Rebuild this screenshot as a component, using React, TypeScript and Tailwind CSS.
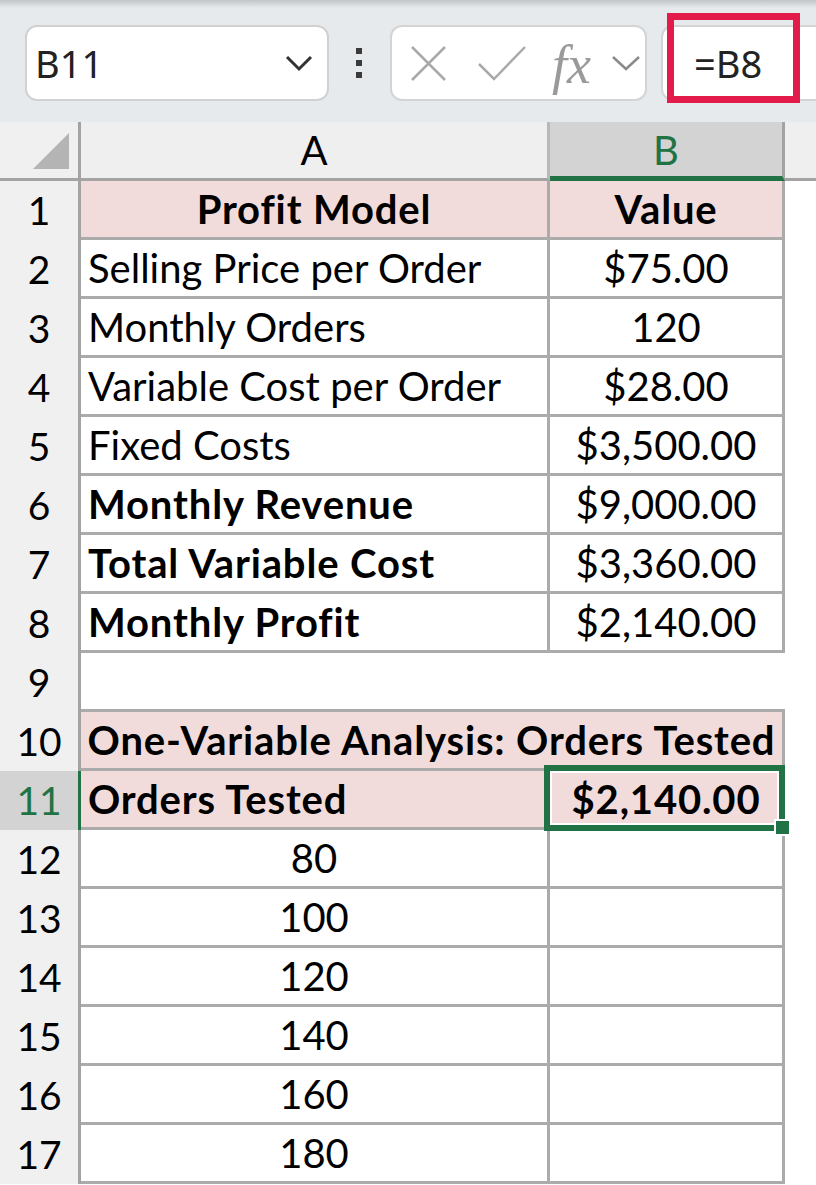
import React from "react";

type Row = {
  n: number;
  a?: string;
  b?: string;
  bold?: boolean;
  head?: boolean;
  centerA?: boolean;
};

const rows: Row[] = [
  { n: 1, a: "Profit Model", b: "Value", bold: true, head: true, centerA: true },
  { n: 2, a: "Selling Price per Order", b: "$75.00" },
  { n: 3, a: "Monthly Orders", b: "120" },
  { n: 4, a: "Variable Cost per Order", b: "$28.00" },
  { n: 5, a: "Fixed Costs", b: "$3,500.00" },
  { n: 6, a: "Monthly Revenue", b: "$9,000.00", bold: true },
  { n: 7, a: "Total Variable Cost", b: "$3,360.00", bold: true },
  { n: 8, a: "Monthly Profit", b: "$2,140.00", bold: true },
];

const tested = [80, 100, 120, 140, 160, 180];

const font = { fontFamily: "Lato, 'Open Sans', sans-serif" };

const bold = "font-bold tracking-[0.85px]";

function RowHeader({ n, active }: { n: number; active?: boolean }) {
  return (
    <div
      className={
        "flex w-[81px] shrink-0 flex-col border-r-[3px] " +
        (active ? "border-r-[#217346] bg-[#d3d3d3]" : "border-r-[#a3a3a3] bg-[#f0f0f0]")
      }
    >
      <div
        className={
          "flex flex-1 items-center justify-center text-[39px] " +
          (active ? "text-[#217346]" : "text-black")
        }
      >
        {n}
      </div>
      <div className="h-[3px] bg-gradient-to-r from-[#e4e4e4] to-[#a3a3a3]" />
    </div>
  );
}

function Toolbar() {
  return (
    <div className="h-[122px] bg-[#e6eaed]">
      <div className="h-[8px] bg-gradient-to-b from-[#c2c6ca] to-[#e6eaed]" />
      <div className="flex items-center pl-[25px] pt-[17px]">
        {/* name box */}
        <div className="flex h-[76px] w-[304px] items-center justify-between rounded-[12px] border-2 border-[#d1d1d1] bg-white pl-[8px] pr-[14px]">
          <span className="text-[38px] text-[#222]" style={{ fontFamily: "'Noto Sans', sans-serif" }}>
            B11
          </span>
          <svg width="28" height="18" viewBox="0 0 28 18">
            <path d="M2 3 L14 15 L26 3" fill="none" stroke="#333" strokeWidth="3" />
          </svg>
        </div>

        <div className="ml-[27px] flex flex-col gap-[6px]">
          <div className="h-[6px] w-[6px] bg-[#3a3a3a]" />
          <div className="h-[6px] w-[6px] bg-[#3a3a3a]" />
          <div className="h-[6px] w-[6px] bg-[#3a3a3a]" />
        </div>

        {/* cancel / enter / insert function */}
        <div className="ml-[28px] flex h-[76px] w-[257px] items-center rounded-[12px] border-2 border-[#d4d4d4] bg-white pl-[18px]">
          <svg width="37" height="35" viewBox="0 0 37 35">
            <path d="M2 1 L35 34 M35 1 L2 34" fill="none" stroke="#a9a9a9" strokeWidth="2.5" />
          </svg>
          <svg className="ml-[31px]" width="48" height="36" viewBox="0 0 48 36">
            <path d="M1 19 L16 34 L47 2" fill="none" stroke="#a9a9a9" strokeWidth="2.5" />
          </svg>
          <span
            className="ml-[26px] pt-[4px] text-[54px] italic leading-none text-[#9a9a9a]"
            style={{ fontFamily: "'Liberation Serif', serif" }}
          >
            fx
          </span>
          <svg className="ml-[20px]" width="30" height="18" viewBox="0 0 30 18">
            <path d="M2 3 L15 15 L28 3" fill="none" stroke="#8a8a8a" strokeWidth="2.5" />
          </svg>
        </div>

        {/* formula input */}
        <div className="relative ml-[14px] flex h-[76px] flex-1 items-center rounded-l-[12px] border-2 border-r-0 border-[#d4d4d4] bg-white pl-[31px]">
          <span className="text-[38px] text-[#222]" style={{ fontFamily: "'Noto Sans', sans-serif" }}>
            =B8
          </span>
          <div className="absolute left-[4px] top-[-14px] h-[90px] w-[133px] border-[7px] border-[#e31b4b]" />
        </div>
      </div>
    </div>
  );
}

function ColumnHeaders() {
  return (
    <div className="flex h-[59px] text-[40px]">
      <div className="relative flex w-[81px] shrink-0 items-end justify-end border-b-[3px] border-r-[3px] border-[#a3a3a3] bg-[#f0f0f0] pb-[9px] pr-[9px]">
        <svg width="36" height="36" viewBox="0 0 36 36">
          <path d="M36 0 L36 36 L0 36 Z" fill="#b4b4b4" />
        </svg>
      </div>
      <div className="flex w-[469px] shrink-0 items-center justify-center border-b-[3px] border-r-[3px] border-b-[#a3a3a3] border-r-[#b8b8b8] bg-[#efefef]">
        A
      </div>
      <div className="flex w-[235px] shrink-0 items-center justify-center border-b-[5px] border-r-[3px] border-b-[#217346] border-r-[#a3a3a3] bg-[#d3d3d3] pt-[2px] text-[#217346]">
        B
      </div>
      <div className="flex-1 border-b-[3px] border-[#a3a3a3] bg-[#efefef]" />
    </div>
  );
}

const cell = "flex shrink-0 items-center overflow-hidden whitespace-nowrap border-b-[3px] border-r-[3px] border-[#ababab]";

export default function App() {
  return (
    <div className="h-[1185px] w-[816px] overflow-hidden bg-white text-black" style={font}>
      <Toolbar />
      <ColumnHeaders />

      {rows.map((r) => (
        <div key={r.n} className="flex h-[59px] text-[40px]">
          <RowHeader n={r.n} />
          <div
            className={
              cell +
              " w-[469px] " +
              (r.centerA ? "justify-center " : "pl-[7px] ") +
              (r.head ? "bg-[#f2dcdb] " : "") +
              (r.bold ? bold : "")
            }
          >
            {r.a}
          </div>
          <div
            className={
              cell +
              " w-[235px] justify-center " +
              (r.head ? "bg-[#f2dcdb] " + bold : "")
            }
          >
            {r.b}
          </div>
        </div>
      ))}

      {/* row 9: blank spacer row */}
      <div className="flex h-[59px] text-[40px]">
        <RowHeader n={9} />
        <div className="w-[704px] shrink-0 border-b-[3px] border-[#ababab]" />
      </div>

      <div className="flex h-[59px] text-[40px]">
        <RowHeader n={10} />
        <div className={cell + " w-[704px] justify-center bg-[#f2dcdb] " + bold}>
          One-Variable Analysis: Orders Tested
        </div>
      </div>

      <div className="flex h-[59px] text-[40px]">
        <RowHeader n={11} active />
        <div className={cell + " w-[469px] bg-[#f2dcdb] pl-[7px] " + bold}>Orders Tested</div>
        <div className={cell + " relative w-[235px] justify-center overflow-visible bg-[#f2dcdb] " + bold}>
          $2,140.00
          <div className="absolute bottom-[-4px] left-[-6px] right-[-3px] top-[-6px] border-[6px] border-[#217346] shadow-[inset_0_0_0_2px_white]" />
          <div className="absolute bottom-[-9px] right-[-9px] h-[17px] w-[17px] border-2 border-white bg-[#217346]" />
        </div>
      </div>

      {tested.map((t, i) => (
        <div key={t} className="flex h-[59px] text-[40px]">
          <RowHeader n={12 + i} />
          <div className={cell + " w-[469px] justify-center"}>{t}</div>
          <div className={cell + " w-[235px]"} />
        </div>
      ))}
    </div>
  );
}
